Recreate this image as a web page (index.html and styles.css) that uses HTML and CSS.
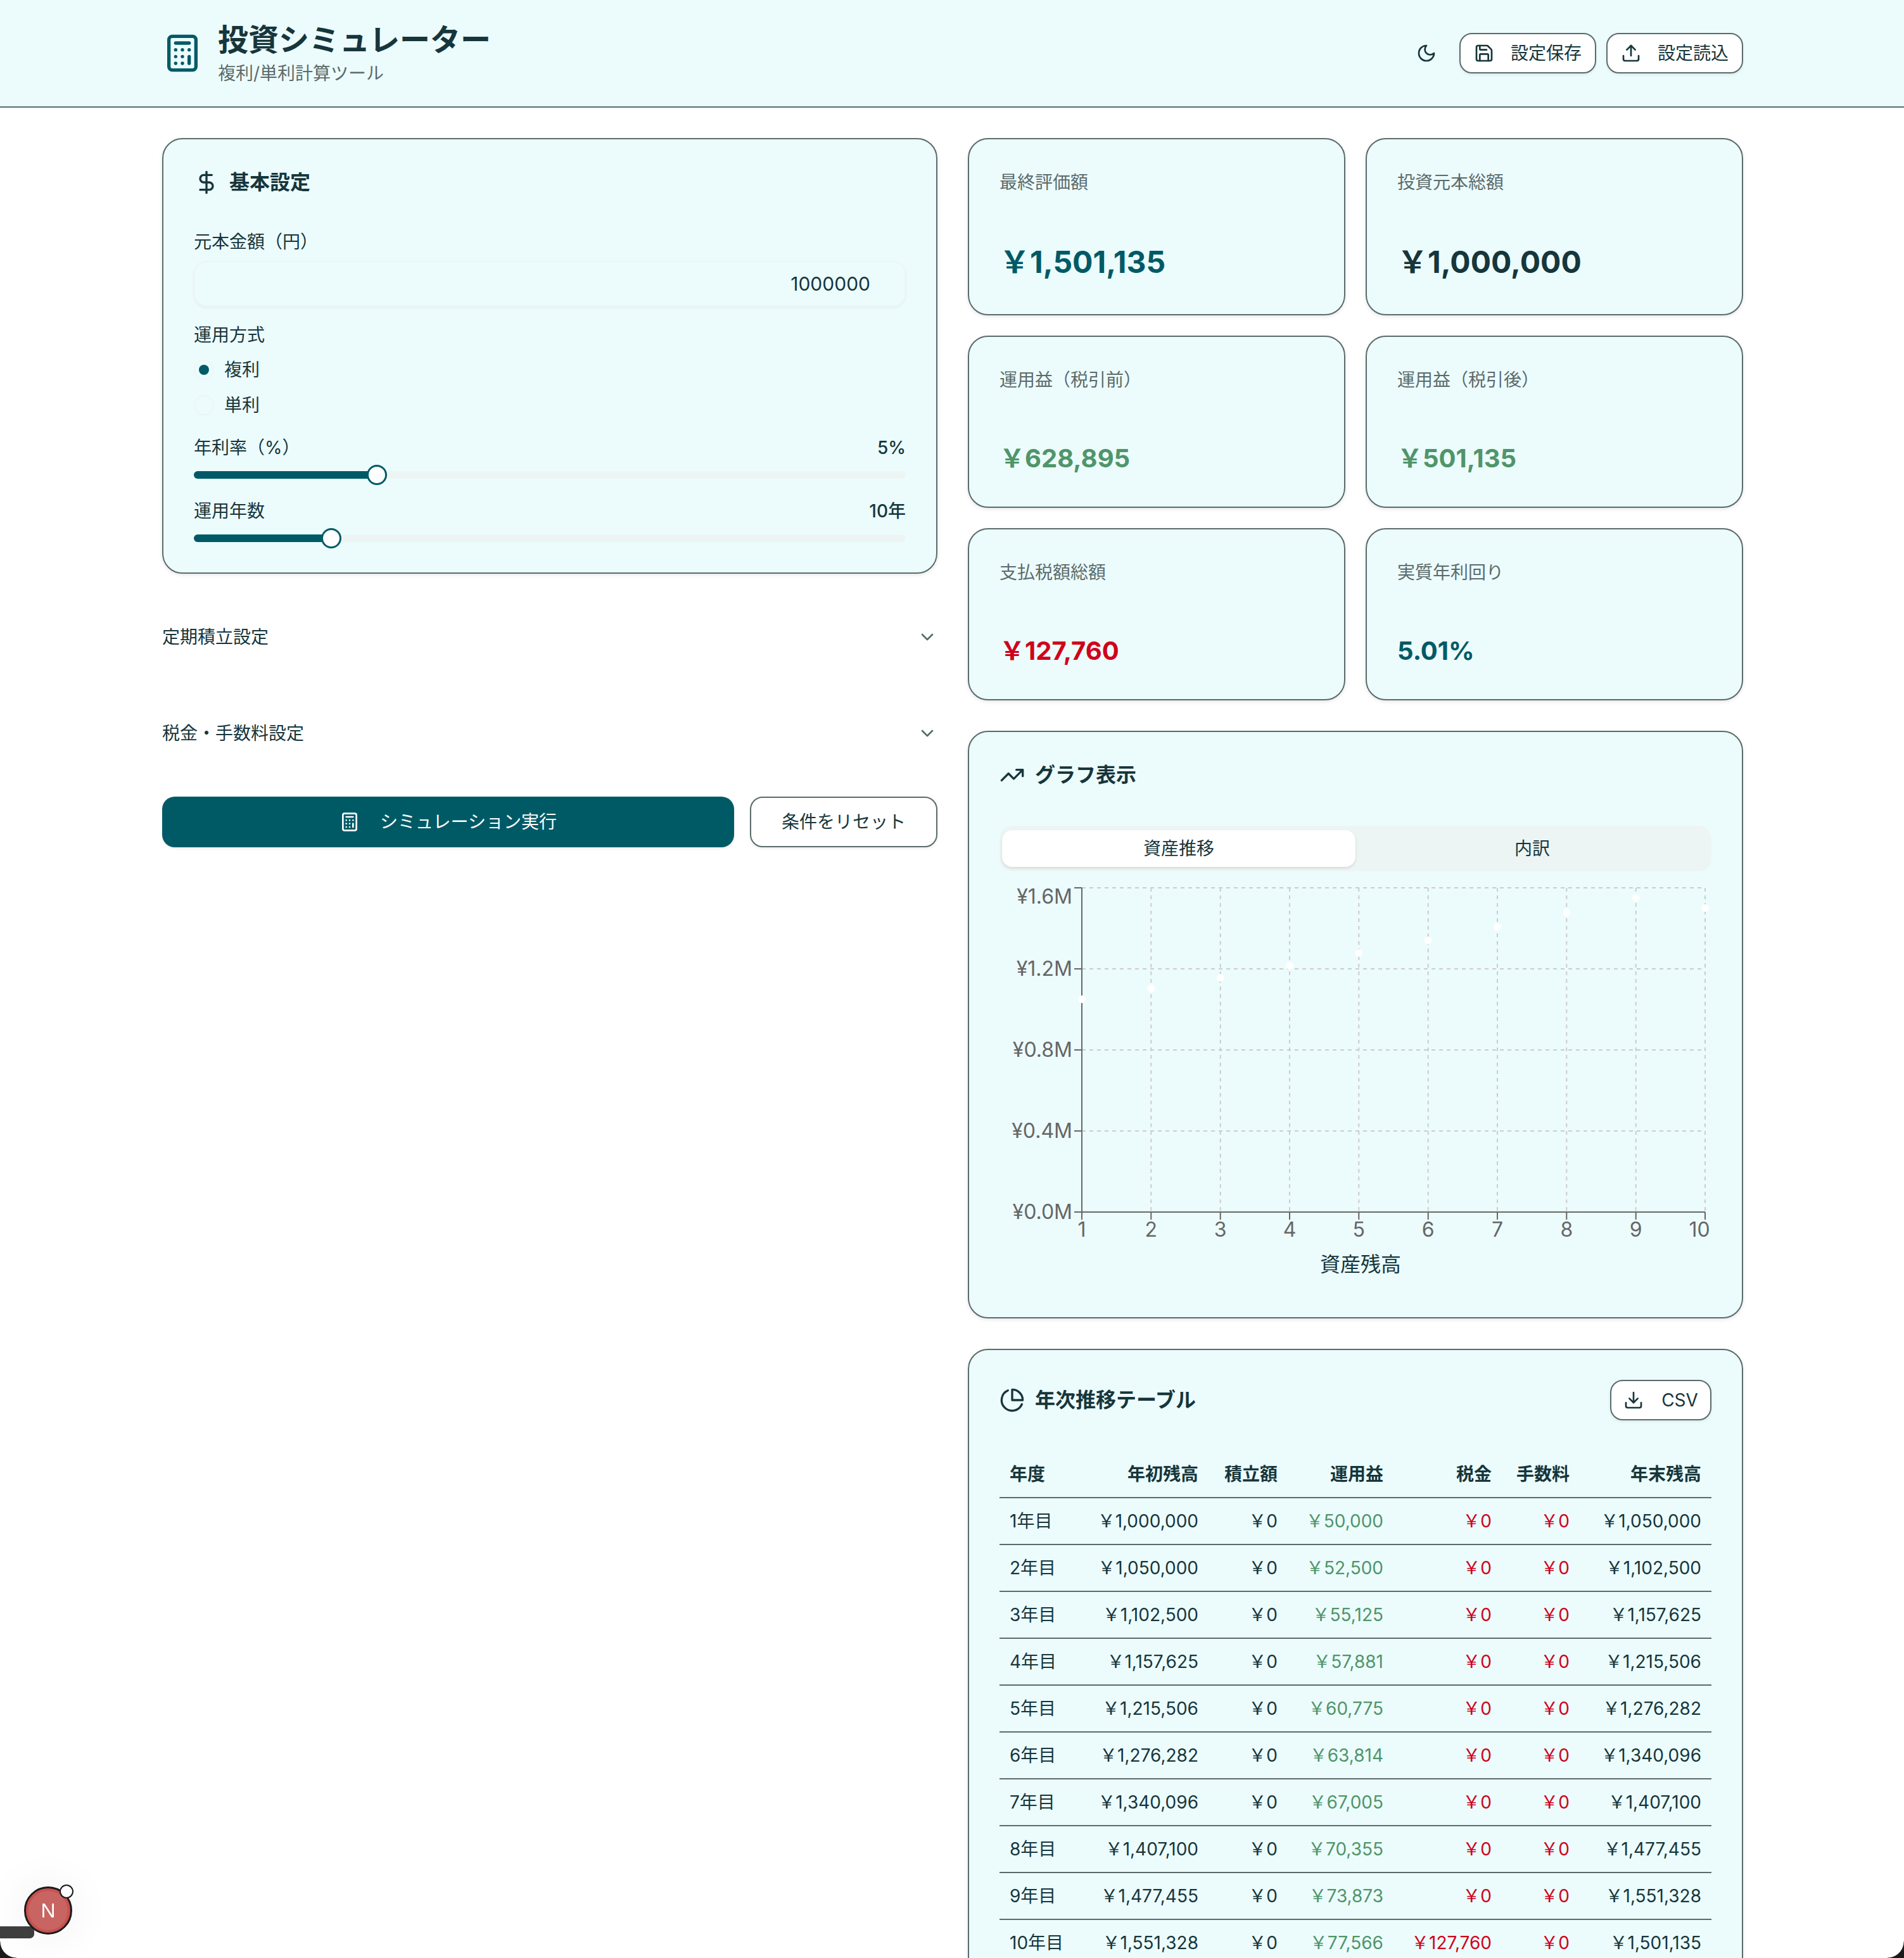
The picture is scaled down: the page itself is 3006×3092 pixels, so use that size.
FILE: index.html
```html
<!DOCTYPE html>
<html lang="ja">
<head>
    <meta charset="UTF-8">
    <meta name="viewport" content="width=device-width, initial-scale=1.0">
    <title>投資シミュレーター</title>
    <link rel="stylesheet" href="styles.css">
</head>
<body>
    <!-- Header -->
    <header class="site-header">
        <div class="header-inner">
            <div class="brand">
                <svg class="icon logo-icon" viewBox="0 0 24 24"><rect width="16" height="20" x="4" y="2" rx="2"/><line x1="8" x2="16" y1="6" y2="6"/><line x1="16" x2="16" y1="14" y2="18"/><path d="M16 10h.01M12 10h.01M8 10h.01M12 14h.01M8 14h.01M12 18h.01M8 18h.01"/></svg>
                <div>
                    <h1 class="brand-title">投資シミュレーター</h1>
                    <p class="brand-sub">複利/単利計算ツール</p>
                </div>
            </div>
            <div class="header-actions">
                <button class="ghost-btn"><svg class="icon icon-32" viewBox="0 0 24 24"><path d="M12 3a6 6 0 0 0 9 9 9 9 0 1 1-9-9Z"/></svg></button>
                <button class="btn btn-header"><svg class="icon icon-32" viewBox="0 0 24 24"><path d="M15.2 3a2 2 0 0 1 1.4.6l3.8 3.8a2 2 0 0 1 .6 1.4V19a2 2 0 0 1-2 2H5a2 2 0 0 1-2-2V5a2 2 0 0 1 2-2z"/><path d="M17 21v-7a1 1 0 0 0-1-1H8a1 1 0 0 0-1 1v7"/><path d="M7 3v4a1 1 0 0 0 1 1h7"/></svg>設定保存</button>
                <button class="btn btn-header"><svg class="icon icon-32" viewBox="0 0 24 24"><path d="M21 15v4a2 2 0 0 1-2 2H5a2 2 0 0 1-2-2v-4"/><polyline points="17 8 12 3 7 8"/><line x1="12" x2="12" y1="3" y2="15"/></svg>設定読込</button>
            </div>
        </div>
    </header>

    <main class="layout">
        <!-- Left column -->
        <div class="left-col">
            <section class="card settings-card">
                <h2 class="card-title"><svg class="icon icon-40" viewBox="0 0 24 24"><line x1="12" x2="12" y1="2" y2="22"/><path d="M17 5H9.5a3.5 3.5 0 0 0 0 7h5a3.5 3.5 0 0 1 0 7H6"/></svg>基本設定</h2>
                <label class="field-label principal-label">元本金額（円）</label>
                <div class="text-input">1000000</div>
                <div class="field-label method-label">運用方式</div>
                <div class="radio-row"><span class="radio radio-on"></span>複利</div>
                <div class="radio-row"><span class="radio"></span>単利</div>
                <div class="field-label slider-label rate-label"><span>年利率（%）</span><span class="slider-value">5%</span></div>
                <div class="slider">
                    <div class="slider-track"><div class="slider-fill" style="width: 289px"></div></div>
                    <span class="slider-thumb" style="left: 273px"></span>
                </div>
                <div class="field-label slider-label"><span>運用年数</span><span class="slider-value">10年</span></div>
                <div class="slider">
                    <div class="slider-track"><div class="slider-fill" style="width: 217px"></div></div>
                    <span class="slider-thumb" style="left: 201px"></span>
                </div>
            </section>

            <div class="accordion-item">定期積立設定<svg class="icon icon-32 chevron" viewBox="0 0 24 24"><path d="m6 9 6 6 6-6"/></svg></div>
            <div class="accordion-item">税金・手数料設定<svg class="icon icon-32 chevron" viewBox="0 0 24 24"><path d="m6 9 6 6 6-6"/></svg></div>

            <div class="action-row">
                <button class="btn btn-primary"><svg class="icon icon-32" viewBox="0 0 24 24"><rect width="16" height="20" x="4" y="2" rx="2"/><line x1="8" x2="16" y1="6" y2="6"/><line x1="16" x2="16" y1="14" y2="18"/><path d="M16 10h.01M12 10h.01M8 10h.01M12 14h.01M8 14h.01M12 18h.01M8 18h.01"/></svg>シミュレーション実行</button>
                <button class="btn btn-reset">条件をリセット</button>
            </div>
        </div>

        <!-- Right column -->
        <div class="right-col">
            <div class="stats">
                <div class="card stat stat-large"><div class="stat-label">最終評価額</div><div class="stat-value teal">&#xFFE5;1,501,135</div></div>
                <div class="card stat stat-large"><div class="stat-label">投資元本総額</div><div class="stat-value">&#xFFE5;1,000,000</div></div>
                <div class="card stat"><div class="stat-label">運用益（税引前）</div><div class="stat-value green">&#xFFE5;628,895</div></div>
                <div class="card stat"><div class="stat-label">運用益（税引後）</div><div class="stat-value green">&#xFFE5;501,135</div></div>
                <div class="card stat"><div class="stat-label">支払税額総額</div><div class="stat-value red">&#xFFE5;127,760</div></div>
                <div class="card stat"><div class="stat-label">実質年利回り</div><div class="stat-value teal">5.01%</div></div>
            </div>

            <section class="card chart-card">
                <h2 class="card-title"><svg class="icon icon-40" viewBox="0 0 24 24"><polyline points="22 7 13.5 15.5 8.5 10.5 2 17"/><polyline points="16 7 22 7 22 13"/></svg>グラフ表示</h2>
                <div class="tabs">
                    <div class="tab tab-active">資産推移</div>
                    <div class="tab">内訳</div>
                </div>
                <svg class="chart" viewBox="0 0 1124 640" width="1124" height="640">
                    <g class="grid-lines">
                        <line x1="130" x2="1114" y1="10" y2="10"/>
                        <line x1="130" x2="1114" y1="138" y2="138"/>
                        <line x1="130" x2="1114" y1="266" y2="266"/>
                        <line x1="130" x2="1114" y1="394" y2="394"/>
                        <line x1="239.3" x2="239.3" y1="10" y2="522"/>
                        <line x1="348.7" x2="348.7" y1="10" y2="522"/>
                        <line x1="458" x2="458" y1="10" y2="522"/>
                        <line x1="567.3" x2="567.3" y1="10" y2="522"/>
                        <line x1="676.7" x2="676.7" y1="10" y2="522"/>
                        <line x1="786" x2="786" y1="10" y2="522"/>
                        <line x1="895.3" x2="895.3" y1="10" y2="522"/>
                        <line x1="1004.7" x2="1004.7" y1="10" y2="522"/>
                        <line x1="1114" x2="1114" y1="10" y2="522"/>
                    </g>
                    <g class="axis-lines">
                        <line x1="130" x2="130" y1="10" y2="522"/>
                        <line x1="130" x2="1114" y1="522" y2="522"/>
                        <path d="M118 10h12M118 138h12M118 266h12M118 394h12M118 522h12"/>
                        <path d="M130 522v12M239.3 522v12M348.7 522v12M458 522v12M567.3 522v12M676.7 522v12M786 522v12M895.3 522v12M1004.7 522v12M1114 522v12"/>
                    </g>
                    <g class="axis-text y-labels">
                        <text x="115" y="35">¥1.6M</text>
                        <text x="115" y="149">¥1.2M</text>
                        <text x="115" y="277">¥0.8M</text>
                        <text x="115" y="405">¥0.4M</text>
                        <text x="115" y="533">¥0.0M</text>
                    </g>
                    <g class="axis-text x-labels">
                        <text x="130" y="561">1</text>
                        <text x="239.3" y="561">2</text>
                        <text x="348.7" y="561">3</text>
                        <text x="458" y="561">4</text>
                        <text x="567.3" y="561">5</text>
                        <text x="676.7" y="561">6</text>
                        <text x="786" y="561">7</text>
                        <text x="895.3" y="561">8</text>
                        <text x="1004.7" y="561">9</text>
                        <text x="1105" y="561">10</text>
                    </g>
                    <text class="axis-title" x="570" y="616">資産残高</text>
                    <g class="dots">
                        <circle cx="130" cy="186" r="6"/>
                        <circle cx="239.3" cy="169" r="6"/>
                        <circle cx="348.7" cy="152" r="6"/>
                        <circle cx="458" cy="133" r="6"/>
                        <circle cx="567.3" cy="113" r="6"/>
                        <circle cx="676.7" cy="93" r="6"/>
                        <circle cx="786" cy="72" r="6"/>
                        <circle cx="895.3" cy="49" r="6"/>
                        <circle cx="1004.7" cy="26" r="6"/>
                        <circle cx="1114" cy="42" r="6"/>
                    </g>
                </svg>
            </section>

            <section class="card table-card">
                <div class="table-head">
                    <h2 class="card-title"><svg class="icon icon-40" viewBox="0 0 24 24"><path d="M21.21 15.89A10 10 0 1 1 8 2.83"/><path d="M22 12A10 10 0 0 0 12 2v10z"/></svg>年次推移テーブル</h2>
                    <button class="btn btn-csv"><svg class="icon icon-32" viewBox="0 0 24 24"><path d="M21 15v4a2 2 0 0 1-2 2H5a2 2 0 0 1-2-2v-4"/><polyline points="7 10 12 15 17 10"/><line x1="12" x2="12" y1="15" y2="3"/></svg>CSV</button>
                </div>
                <table class="yearly">
                    <colgroup>
                        <col class="col-year"><col class="col-start"><col class="col-add"><col class="col-gain"><col class="col-tax"><col class="col-fee"><col class="col-end">
                    </colgroup>
                    <thead>
                        <tr><th>年度</th><th>年初残高</th><th>積立額</th><th>運用益</th><th>税金</th><th>手数料</th><th>年末残高</th></tr>
                    </thead>
                    <tbody>
                        <tr><td>1年目</td><td>&#xFFE5;1,000,000</td><td>&#xFFE5;0</td><td class="green">&#xFFE5;50,000</td><td class="red">&#xFFE5;0</td><td class="red">&#xFFE5;0</td><td>&#xFFE5;1,050,000</td></tr>
                        <tr><td>2年目</td><td>&#xFFE5;1,050,000</td><td>&#xFFE5;0</td><td class="green">&#xFFE5;52,500</td><td class="red">&#xFFE5;0</td><td class="red">&#xFFE5;0</td><td>&#xFFE5;1,102,500</td></tr>
                        <tr><td>3年目</td><td>&#xFFE5;1,102,500</td><td>&#xFFE5;0</td><td class="green">&#xFFE5;55,125</td><td class="red">&#xFFE5;0</td><td class="red">&#xFFE5;0</td><td>&#xFFE5;1,157,625</td></tr>
                        <tr><td>4年目</td><td>&#xFFE5;1,157,625</td><td>&#xFFE5;0</td><td class="green">&#xFFE5;57,881</td><td class="red">&#xFFE5;0</td><td class="red">&#xFFE5;0</td><td>&#xFFE5;1,215,506</td></tr>
                        <tr><td>5年目</td><td>&#xFFE5;1,215,506</td><td>&#xFFE5;0</td><td class="green">&#xFFE5;60,775</td><td class="red">&#xFFE5;0</td><td class="red">&#xFFE5;0</td><td>&#xFFE5;1,276,282</td></tr>
                        <tr><td>6年目</td><td>&#xFFE5;1,276,282</td><td>&#xFFE5;0</td><td class="green">&#xFFE5;63,814</td><td class="red">&#xFFE5;0</td><td class="red">&#xFFE5;0</td><td>&#xFFE5;1,340,096</td></tr>
                        <tr><td>7年目</td><td>&#xFFE5;1,340,096</td><td>&#xFFE5;0</td><td class="green">&#xFFE5;67,005</td><td class="red">&#xFFE5;0</td><td class="red">&#xFFE5;0</td><td>&#xFFE5;1,407,100</td></tr>
                        <tr><td>8年目</td><td>&#xFFE5;1,407,100</td><td>&#xFFE5;0</td><td class="green">&#xFFE5;70,355</td><td class="red">&#xFFE5;0</td><td class="red">&#xFFE5;0</td><td>&#xFFE5;1,477,455</td></tr>
                        <tr><td>9年目</td><td>&#xFFE5;1,477,455</td><td>&#xFFE5;0</td><td class="green">&#xFFE5;73,873</td><td class="red">&#xFFE5;0</td><td class="red">&#xFFE5;0</td><td>&#xFFE5;1,551,328</td></tr>
                        <tr><td>10年目</td><td>&#xFFE5;1,551,328</td><td>&#xFFE5;0</td><td class="green">&#xFFE5;77,566</td><td class="red">&#xFFE5;127,760</td><td class="red">&#xFFE5;0</td><td>&#xFFE5;1,501,135</td></tr>
                    </tbody>
                </table>
            </section>
        </div>
    </main>

    <!-- Dev indicator and window corners, over the page -->
    <div class="corner corner-left"></div>
    <div class="corner corner-right"></div>
    <div class="dev-bar"></div>
    <div class="dev-badge">N<span class="dev-dot"></span></div>
</body>
</html>
```

FILE: styles.css
```css
/* General styling */
html, body {
    margin: 0;
    padding: 0;
    height: 100%;
    overflow: hidden;
    background: #ffffff;
    color: #16363b;
    font-family: Inter, "Noto Sans CJK JP", sans-serif;
    font-size: 28px;
    line-height: 40px;
}

h1, h2, p {
    margin: 0;
}

button {
    font: inherit;
    color: inherit;
}

.icon {
    fill: none;
    stroke: currentColor;
    stroke-width: 2;
    stroke-linecap: round;
    stroke-linejoin: round;
    flex-shrink: 0;
}

.icon-32 {
    width: 32px;
    height: 32px;
}

.icon-40 {
    width: 40px;
    height: 40px;
}

/* Header */
.site-header {
    background: #ecfcfd;
    border-bottom: 2px solid #5b6b6b;
}

.header-inner {
    max-width: 2560px;
    margin: 0 auto;
    padding: 31px 31px 31px 33px;
    box-sizing: border-box;
    display: flex;
    align-items: center;
    justify-content: space-between;
}

.brand {
    display: flex;
    align-items: center;
    gap: 24px;
}

.logo-icon {
    width: 64px;
    height: 64px;
    color: #005a66;
}

.brand-title {
    font-size: 48px;
    line-height: 64px;
    font-weight: 700;
}

.brand-sub {
    color: #5b6b6b;
    line-height: 42px;
}

.header-actions {
    display: flex;
    align-items: center;
    gap: 16px;
}

.ghost-btn {
    width: 72px;
    height: 64px;
    border: none;
    background: none;
    padding: 0;
    display: flex;
    align-items: center;
    justify-content: center;
}

/* Buttons */
.btn {
    display: flex;
    align-items: center;
    justify-content: center;
    height: 64px;
    box-sizing: border-box;
    background: #ffffff;
    border: 2px solid #5b6b6b;
    border-radius: 20px;
    box-shadow: 0 2px 4px rgba(0, 0, 0, 0.08);
}

.btn-header {
    width: 216px;
    gap: 26px;
}

.btn-primary {
    flex: 1;
    height: 80px;
    gap: 32px;
    background: #005a66;
    border: none;
    color: #ffffff;
}

.btn-reset {
    width: 296px;
    height: 80px;
}

.btn-csv {
    width: 160px;
    gap: 28px;
}

/* Page layout */
.layout {
    max-width: 2560px;
    margin: 0 auto;
    padding: 48px 31px 0 33px;
    box-sizing: border-box;
    display: grid;
    grid-template-columns: 1fr 1fr;
    gap: 48px;
    align-items: start;
}

.left-col, .right-col {
    display: flex;
    flex-direction: column;
    gap: 48px;
}

.card {
    background: #ecfcfd;
    border: 2px solid #5b6b6b;
    border-radius: 32px;
    box-shadow: 0 2px 6px rgba(0, 0, 0, 0.1);
    padding: 48px;
}

.card-title {
    display: flex;
    align-items: center;
    gap: 16px;
    font-size: 32px;
    line-height: 40px;
    font-weight: 700;
}

/* Basic settings */
.settings-card {
    padding-bottom: 38px;
}

.field-label {
    line-height: 40px;
}

.principal-label {
    display: block;
    margin-top: 54px;
}

.text-input {
    height: 72px;
    margin-top: 10px;
    padding-right: 54px;
    box-sizing: border-box;
    display: flex;
    align-items: center;
    justify-content: flex-end;
    font-size: 30px;
    border: 2px solid #edf5f4;
    border-radius: 20px;
    box-shadow: 0 2px 4px rgba(0, 0, 0, 0.05);
}

.method-label {
    margin-top: 25px;
}

.radio-row {
    display: flex;
    align-items: center;
    gap: 16px;
    height: 32px;
    margin-top: 24px;
}

.method-label + .radio-row {
    margin-top: 19px;
}

.radio {
    width: 32px;
    height: 32px;
    box-sizing: border-box;
    border: 2px solid #edf5f4;
    border-radius: 50%;
    display: flex;
    align-items: center;
    justify-content: center;
}

.radio-on::after {
    content: "";
    width: 16px;
    height: 16px;
    border-radius: 50%;
    background: #005a66;
}

.slider-label {
    display: flex;
    justify-content: space-between;
    margin-top: 21px;
}

.rate-label {
    margin-top: 31px;
}

.slider-value {
    font-weight: 500;
}

.slider {
    position: relative;
    height: 32px;
    margin-top: 7px;
    display: flex;
    align-items: center;
}

.slider-track {
    flex: 1;
    height: 12px;
    border-radius: 6px;
    background: #edf5f4;
    overflow: hidden;
}

.slider-fill {
    height: 100%;
    background: #005a66;
}

.slider-thumb {
    position: absolute;
    top: 0;
    width: 32px;
    height: 32px;
    box-sizing: border-box;
    background: #ffffff;
    border: 3px solid #005a66;
    border-radius: 50%;
}

/* Accordion */
.accordion-item {
    height: 104px;
    display: flex;
    align-items: center;
    justify-content: space-between;
}

.chevron {
    color: #5b6b6b;
}

.action-row {
    display: flex;
    gap: 25px;
}

/* Stat cards */
.stats {
    display: grid;
    grid-template-columns: 1fr 1fr;
    column-gap: 32px;
    row-gap: 32px;
}

.stat-label {
    color: #5b6b6b;
    line-height: 40px;
}

.stat-value {
    margin-top: 76px;
    font-size: 40px;
    line-height: 56px;
    font-weight: 700;
}

.stat-large .stat-value {
    margin-top: 74px;
    margin-bottom: 2px;
    font-size: 48px;
    line-height: 64px;
}

.teal {
    color: #005a66;
}

.green {
    color: #4f9569;
}

.red {
    color: #d0021b;
}

/* Chart */
.tabs {
    display: grid;
    grid-template-columns: 1fr 1fr;
    margin-top: 60px;
    height: 72px;
    box-sizing: border-box;
    padding: 7px 4px;
    background: #edf5f4;
    border-radius: 20px;
}

.tab {
    display: flex;
    align-items: center;
    justify-content: center;
    border-radius: 16px;
}

.tab-active {
    background: #ffffff;
    box-shadow: 0 2px 4px rgba(0, 0, 0, 0.12);
}

.chart {
    display: block;
    margin-top: 16px;
}

.grid-lines line {
    stroke: #cccccc;
    stroke-width: 2;
    stroke-dasharray: 6 6;
}

.axis-lines line, .axis-lines path {
    stroke: #666666;
    stroke-width: 2;
    fill: none;
}

.axis-text text {
    font-size: 32px;
    fill: #666666;
}

.y-labels text {
    text-anchor: end;
}

.x-labels text {
    text-anchor: middle;
}

.axis-title {
    font-size: 32px;
    fill: #16363b;
    text-anchor: middle;
}

.dots circle {
    fill: #ffffff;
}

/* Table */
.table-head {
    display: flex;
    align-items: center;
    justify-content: space-between;
    margin-top: -1px;
}

.yearly {
    width: 100%;
    margin-top: 40px;
    border-collapse: collapse;
    table-layout: fixed;
}

.col-year { width: 130px; }
.col-start { width: 200px; }
.col-add { width: 125px; }
.col-gain { width: 167px; }
.col-tax { width: 171px; }
.col-fee { width: 123px; }
.col-end { width: 208px; }

.yearly th, .yearly td {
    padding: 0 16px;
    text-align: right;
    white-space: nowrap;
    border-bottom: 2px solid #5b6b6b;
}

.yearly th {
    height: 82px;
    padding-top: 8px;
    box-sizing: border-box;
    font-weight: 700;
}

.yearly td {
    height: 74px;
    box-sizing: border-box;
}

.yearly th:first-child, .yearly td:first-child {
    text-align: left;
}

/* Dev indicator */
.dev-badge {
    position: fixed;
    left: 38px;
    top: 2979px;
    width: 76px;
    height: 76px;
    box-sizing: border-box;
    display: flex;
    align-items: center;
    justify-content: center;
    background: #c86462;
    border: 3px solid #1a1a1a;
    border-radius: 50%;
    box-shadow: inset 0 0 0 4px #c9504f, 0 0 70px rgba(0, 0, 0, 0.08);
    color: #ffffff;
    font-family: "Liberation Sans", sans-serif;
    font-size: 32px;
}

.dev-dot {
    position: absolute;
    left: 53px;
    top: -6px;
    width: 18px;
    height: 18px;
    background: #ffffff;
    border: 2px solid #1a1a1a;
    border-radius: 50%;
}

.dev-bar {
    position: fixed;
    left: 0;
    top: 3042px;
    width: 54px;
    height: 19px;
    background: #3f3f3f;
    border-radius: 0 7px 7px 0;
}

/* Rounded window corners of the capture */
.corner {
    position: fixed;
    bottom: 0;
    width: 26px;
    height: 26px;
}

.corner-left {
    left: 0;
    background: radial-gradient(circle at 100% 0, transparent 25px, #1a1a1a 26px);
}

.corner-right {
    right: 0;
    background: radial-gradient(circle at 0 0, transparent 25px, #1a1a1a 26px);
}
```
